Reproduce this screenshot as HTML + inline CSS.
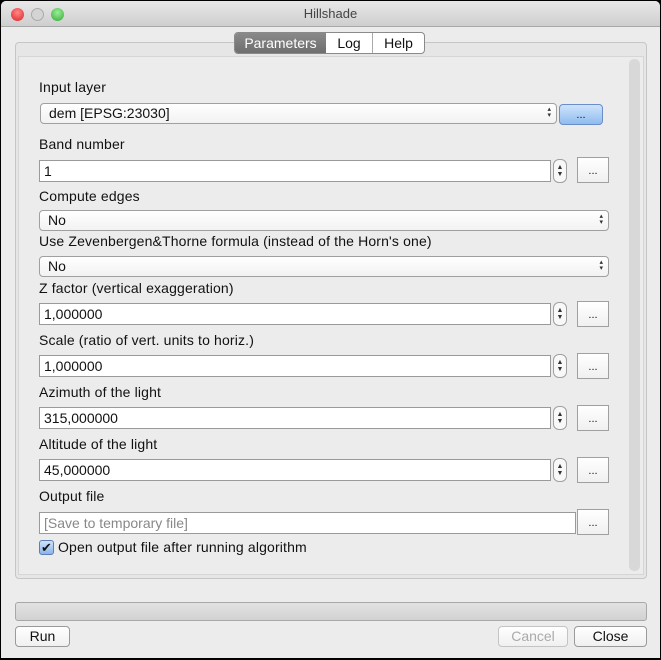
<!DOCTYPE html>
<html><head><meta charset="utf-8"><style>
*{box-sizing:border-box}
body{margin:0;width:661px;height:660px;background:#000;font-family:"Liberation Sans",sans-serif;font-size:14px;color:#111;overflow:hidden}
.win{position:absolute;left:1px;top:1px;width:659px;height:657px;background:#ececec;border-radius:5px 5px 0 0;overflow:hidden}
.tb{position:absolute;left:0;top:0;width:100%;height:26px;background:linear-gradient(#e8e8e8,#cfcfcf);border-bottom:1px solid #a8a8a8;text-align:center;line-height:26px;font-size:13px;color:#444}
.dot{position:absolute;top:7px;width:13px;height:13px;border-radius:50%}
.a{position:absolute}
.lbl{position:absolute;left:38px;font-size:14px;letter-spacing:0.15px}
.fld{position:absolute;background:#fff;border:1px solid #9a9a9a;height:22px;line-height:20px;padding-left:4px;font-size:14px}
.cmb{position:absolute;background:linear-gradient(#fff,#f2f2f2);border:1px solid #a0a0a0;border-radius:4px;height:21px;line-height:19px;padding-left:8px;font-size:14px}
.cmb:after{content:"▴\A▾";white-space:pre;position:absolute;right:5px;top:3px;font-size:7px;line-height:6px;color:#333}
.spin{position:absolute;width:14px;height:24px;border:1px solid #a0a0a0;border-radius:6px;background:#f8f8f8;font-size:7px;line-height:7px;text-align:center;padding-top:4px;color:#333}
.btn{position:absolute;width:32px;height:26px;background:linear-gradient(#fff,#f0f0f0);border:1px solid #a0a0a0;text-align:center;line-height:26px;font-size:11px}
.pb{position:absolute;height:21px;background:linear-gradient(#fff,#f0f0f0);border:1px solid #9a9a9a;border-radius:4px;text-align:center;line-height:19px;font-size:14px}
</style></head><body><div class="win">
<div class="tb">Hillshade
<div class="dot" style="left:10px;background:radial-gradient(circle at 50% 35%,#f88,#d22)"></div>
<div class="dot" style="left:30px;background:#d4d4d4;border:1px solid #aaa"></div>
<div class="dot" style="left:50px;background:radial-gradient(circle at 50% 35%,#9e9,#3a3)"></div>
</div>
<div class="a" style="left:14px;top:41px;width:632px;height:537px;border:1px solid #c6c6c6;border-radius:4px;background:#e6e6e6"></div>
<div class="a" style="left:17px;top:55px;width:626px;height:519px;background:#ececec;border:1px solid #d6d6d6"></div>
<div class="a" style="left:628px;top:58px;width:11px;height:512px;background:#d8d8d8;border-radius:5px"></div>
<div class="a" style="left:233px;top:31px;width:191px;height:22px;border:1px solid #8a8a8a;border-radius:4px;background:#fff;overflow:hidden;display:flex;font-size:14px;line-height:20px">
<div style="width:91px;background:linear-gradient(#8a8a8a,#6e6e6e);color:#fff;text-align:center">Parameters</div>
<div style="width:47px;text-align:center;border-right:1px solid #aaa">Log</div>
<div style="flex:1;text-align:center">Help</div></div>

<div class="lbl" style="top:78px">Input layer</div>
<div class="cmb" style="left:39px;top:102px;width:517px">dem [EPSG:23030]</div>
<div class="a" style="left:558px;top:103px;width:44px;height:21px;border:1px solid #6a8fc8;border-radius:4px;background:linear-gradient(#cfe3fb,#8fbcf0);text-align:center;font-size:11px;line-height:20px">...</div>

<div class="lbl" style="top:135px">Band number</div>
<div class="fld" style="left:38px;top:159px;width:512px">1</div>
<div class="spin" style="left:552px;top:158px">▲<br>▼</div>
<div class="btn" style="left:576px;top:156px">...</div>

<div class="lbl" style="top:187px">Compute edges</div>
<div class="cmb" style="left:38px;top:209px;width:570px">No</div>
<div class="lbl" style="top:232px">Use Zevenbergen&amp;Thorne formula (instead of the Horn's one)</div>
<div class="cmb" style="left:38px;top:255px;width:570px">No</div>

<div class="lbl" style="top:279px">Z factor (vertical exaggeration)</div>
<div class="fld" style="left:38px;top:302px;width:512px">1,000000</div>
<div class="spin" style="left:552px;top:301px">▲<br>▼</div>
<div class="btn" style="left:576px;top:300px">...</div>

<div class="lbl" style="top:331px">Scale (ratio of vert. units to horiz.)</div>
<div class="fld" style="left:38px;top:354px;width:512px">1,000000</div>
<div class="spin" style="left:552px;top:353px">▲<br>▼</div>
<div class="btn" style="left:576px;top:352px">...</div>

<div class="lbl" style="top:383px">Azimuth of the light</div>
<div class="fld" style="left:38px;top:406px;width:512px">315,000000</div>
<div class="spin" style="left:552px;top:405px">▲<br>▼</div>
<div class="btn" style="left:576px;top:404px">...</div>

<div class="lbl" style="top:435px">Altitude of the light</div>
<div class="fld" style="left:38px;top:458px;width:512px">45,000000</div>
<div class="spin" style="left:552px;top:457px">▲<br>▼</div>
<div class="btn" style="left:576px;top:456px">...</div>

<div class="lbl" style="top:487px">Output file</div>
<div class="fld" style="left:38px;top:511px;width:537px;color:#888">[Save to temporary file]</div>
<div class="btn" style="left:576px;top:508px">...</div>
<div class="a" style="left:38px;top:539px;width:15px;height:15px;border:1px solid #5a7fb8;border-radius:3px;background:linear-gradient(#d0e2fa,#8ab4ea);font-size:13px;line-height:13px;text-align:center;color:#111">✔</div>
<div class="lbl" style="left:57px;top:538px">Open output file after running algorithm</div>

<div class="a" style="left:14px;top:601px;width:632px;height:19px;border:1px solid #a8a8a8;border-radius:3px;background:linear-gradient(#e2e2e2,#d2d2d2)"></div>
<div class="pb" style="left:14px;top:625px;width:55px">Run</div>
<div class="pb" style="left:497px;top:625px;width:70px;color:#aaa;border-color:#c4c4c4">Cancel</div>
<div class="pb" style="left:573px;top:625px;width:73px">Close</div>
</div></body></html>
